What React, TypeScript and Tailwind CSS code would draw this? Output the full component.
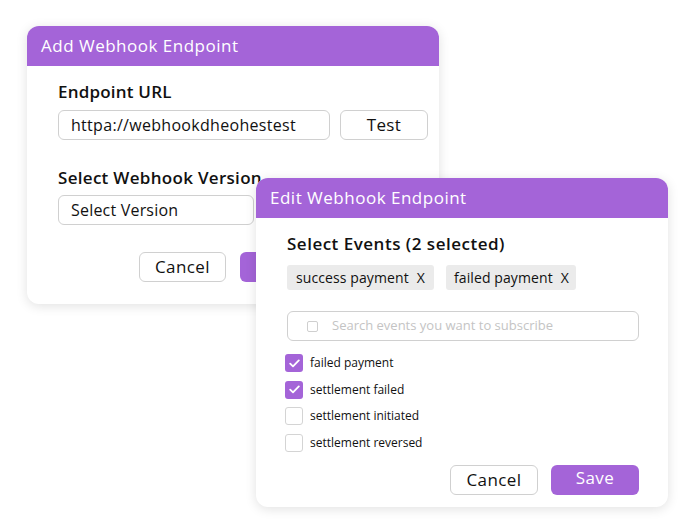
const font = { fontFamily: '"Open Sans", "Noto Sans", sans-serif' };

const events = [
  { label: "failed payment", checked: true },
  { label: "settlement failed", checked: true },
  { label: "settlement initiated", checked: false },
  { label: "settlement reversed", checked: false },
];

function Check({ checked }: { checked: boolean }) {
  if (!checked) {
    return <span className="h-[18px] w-[18px] rounded-[3px] border border-[#d4d4d4] bg-white" />;
  }
  return (
    <span className="flex h-[18px] w-[18px] items-center justify-center rounded-[3px] bg-[#a464d8]">
      <svg width="11" height="9" viewBox="0 0 11 9" fill="none">
        <path d="M1.2 4.6 4 7.3 9.8 1.4" stroke="white" strokeWidth="1.8" strokeLinecap="round" strokeLinejoin="round" />
      </svg>
    </span>
  );
}

function Header({ title }: { title: string }) {
  return (
    <div className="flex h-10 items-center rounded-t-xl bg-[#a464d8] px-[14px] text-[17px] font-medium tracking-[0.5px] text-white">
      {title}
    </div>
  );
}

export default function App() {
  return (
    <div className="relative h-[532px] w-[696px] overflow-hidden bg-white text-[#111]" style={font}>
      {/* add endpoint window */}
      <div className="absolute left-[27px] top-[26px] flex h-[278px] w-[412px] flex-col rounded-xl bg-white shadow-[0_2px_12px_rgba(0,0,0,0.12)]">
        <Header title="Add Webhook Endpoint" />
        <div className="flex flex-col pl-[31px] pt-[14px]">
          <div className="text-[17px] font-semibold leading-6 tracking-[0.2px]">Endpoint URL</div>
          <div className="mt-[6px] flex gap-[10px]">
            <div className="flex h-[30px] w-[272px] items-center rounded-md border border-[#d0d0d0] px-[12px] text-[16px] tracking-[0.3px]">
              httpa://webhookdheohestest
            </div>
            <div className="flex h-[30px] w-[88px] items-center justify-center rounded-md border border-[#d0d0d0] text-[17px] tracking-[0.3px]">
              Test
            </div>
          </div>
          <div className="mt-[26px] text-[17px] font-semibold leading-6 tracking-[0.3px]">Select Webhook Version</div>
          <div className="mt-[5px] flex h-[30px] w-[196px] items-center rounded-md border border-[#d0d0d0] px-[12px] text-[16px] tracking-[0.2px]">
            Select Version
          </div>
          <div className="mt-[27px] flex gap-[14px] pl-[81px]">
            <div className="flex h-[30px] w-[87px] items-center justify-center rounded-md border border-[#d0d0d0] text-[17px] tracking-[0.4px]">
              Cancel
            </div>
            <div className="h-[30px] w-[88px] rounded-md bg-[#a464d8]" />
          </div>
        </div>
      </div>

      {/* edit endpoint window */}
      <div className="absolute left-[256px] top-[178px] flex h-[329px] w-[412px] flex-col rounded-xl bg-white shadow-[0_2px_12px_rgba(0,0,0,0.12)]">
        <Header title="Edit Webhook Endpoint" />
        <div className="flex flex-col pl-[31px] pr-[29px] pt-[14px]">
          <div className="text-[17px] font-semibold leading-6 tracking-[0.5px]">Select Events (2 selected)</div>
          <div className="mt-[9px] flex gap-[12px]">
            <span className="flex h-[25px] w-[147px] items-center rounded-[3px] bg-[#ebebeb] pl-[9px] text-[14px] tracking-[0.1px]">
              success payment<span className="ml-[8px]">X</span>
            </span>
            <span className="flex h-[25px] w-[130px] items-center rounded-[3px] bg-[#ebebeb] pl-[8px] text-[14px] tracking-[0.1px]">
              failed payment<span className="ml-[8px]">X</span>
            </span>
          </div>
          <div className="mt-[21px] flex h-[30px] items-center rounded-md border border-[#d0d0d0] pl-[19px] text-[13px] text-[#c4c4c4]">
            <span className="h-[11px] w-[11px] rounded-[2px] border border-[#cfcfcf]" />
            <span className="ml-[14px]">Search events you want to subscribe</span>
          </div>
          <div className="-ml-[2px] mt-[13px] flex flex-col gap-[8.5px]">
            {events.map((e) => (
              <div key={e.label} className="flex items-center gap-[7px] text-[12px]">
                <Check checked={e.checked} />
                <span>{e.label}</span>
              </div>
            ))}
          </div>
          <div className="mt-[13px] flex justify-end gap-[13px]">
            <div className="flex h-[30px] w-[88px] items-center justify-center rounded-md border border-[#d0d0d0] text-[17px] tracking-[0.4px]">
              Cancel
            </div>
            <div className="flex h-[30px] w-[88px] items-center justify-center rounded-md bg-[#a464d8] pb-[3px] text-[17px] tracking-[0.4px] text-white">
              Save
            </div>
          </div>
        </div>
      </div>
    </div>
  );
}
